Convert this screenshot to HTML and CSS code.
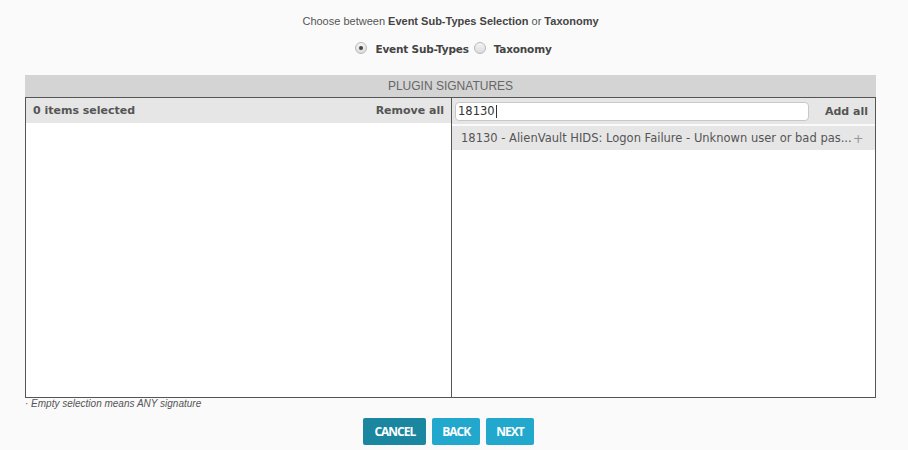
FILE: index.html
```html
<!DOCTYPE html>
<html>
<head>
<meta charset="utf-8">
<link rel="stylesheet" href="styles.css">
</head>
<body>
<div class="page">
  <p class="intro">Choose between <b>Event Sub-Types Selection</b> or <b>Taxonomy</b></p>
  <div class="radios">
    <label class="radio"><span class="dot checked"></span><b>Event Sub-Types</b></label>
    <label class="radio"><span class="dot"></span><b>Taxonomy</b></label>
  </div>
  <div class="box">
    <div class="box-title">PLUGIN SIGNATURES</div>
    <div class="panels">
      <div class="panel left">
        <div class="panel-head">
          <span>0 items selected</span>
          <span>Remove all</span>
        </div>
      </div>
      <div class="panel right">
        <div class="panel-head search">
          <div class="input">18130<span class="caret"></span></div>
          <span>Add all</span>
        </div>
        <div class="item">
          <span>18130 - AlienVault HIDS: Logon Failure - Unknown user or bad pas...</span>
          <span class="plus">+</span>
        </div>
      </div>
    </div>
  </div>
  <p class="note">· Empty selection means ANY signature</p>
  <div class="buttons">
    <button class="btn dark">CANCEL</button>
    <button class="btn">BACK</button>
    <button class="btn">NEXT</button>
  </div>
</div>
</body>
</html>
```

FILE: styles.css
```css
html, body {
  margin: 0;
  padding: 0;
  background: #fafafa;
}
.page {
  width: 851px;
  margin-left: 25px;
  font-family: "Liberation Sans", Arial, sans-serif;
  color: #555;
}
.intro {
  margin: 0;
  padding-top: 14px;
  height: 17px;
  font-size: 11px;
  line-height: 14px;
  text-align: center;
  color: #555;
}
.intro b {
  color: #444;
}
.radios {
  display: flex;
  justify-content: center;
  gap: 5px;
  margin-top: 9px;
  height: 19px;
  font-family: "DejaVu Sans", Verdana, sans-serif;
  font-size: 10.5px;
  line-height: 19px;
  color: #444;
  padding-left: 6px;
}
.radio {
  display: flex;
  align-items: center;
  gap: 8px;
}
.radio b { font-weight: bold; color: #444; letter-spacing: -0.2px; }
.dot {
  width: 12px;
  height: 12px;
  border-radius: 50%;
  border: 1px solid #b8b8b8;
  background: linear-gradient(#f4f4f4, #dcdcdc);
  box-sizing: border-box;
  position: relative;
  top: -2px;
}
.dot.checked::after {
  content: "";
  position: absolute;
  left: 3px;
  top: 3px;
  width: 4px;
  height: 4px;
  border-radius: 50%;
  background: #444;
}
.box {
  margin-top: 16px;
}
.box-title {
  height: 22px;
  line-height: 22px;
  background: #d4d4d4;
  text-align: center;
  font-size: 12px;
  color: #666;
}
.panels {
  display: flex;
  height: 299px;
  border: 1px solid #555;
  background: #fff;
}
.panel {
  flex: 1;
  min-width: 0;
}
.panel.left {
  border-right: 1px solid #555;
  flex: 0 0 425px;
}
.panel-head {
  display: flex;
  justify-content: space-between;
  align-items: center;
  height: 25px;
  padding: 0 7px 0 7px;
  background: #e6e6e6;
  font-family: "DejaVu Sans", Verdana, sans-serif;
  font-size: 11px;
  font-weight: bold;
  color: #555;
}
.panel-head.search {
  height: 26px;
  padding: 0 7px 0 3px;
  border-bottom: 2px solid #fafafa;
}
.input {
  width: 354px;
  height: 19px;
  box-sizing: border-box;
  border: 1px solid #c8c8c8;
  border-radius: 4px;
  background: #fff;
  font-weight: normal;
  font-size: 11.5px;
  line-height: 17px;
  padding-left: 2px;
  color: #333;
  display: flex;
  align-items: center;
}
.caret {
  display: inline-block;
  width: 1px;
  height: 13px;
  background: #333;
  margin-left: 1px;
}
.item {
  display: flex;
  align-items: center;
  gap: 1px;
  height: 24px;
  background: #e6e6e6;
  padding: 0 0 0 9px;
  font-family: "DejaVu Sans", Verdana, sans-serif;
  font-size: 11.5px;
  color: #555;
  white-space: nowrap;
}
.plus {
  color: #999;
  font-size: 13px;
}
.note {
  margin: 0;
  padding-top: 0;
  height: 16px;
  font-size: 10px;
  line-height: 12px;
  font-style: italic;
  color: #555;
}
.buttons {
  display: flex;
  justify-content: center;
  gap: 6px;
  margin-top: 4px;
  padding-right: 4px;
}
.btn {
  height: 27px;
  border: none;
  border-radius: 2px;
  background: #21a8cc;
  color: #fff;
  font-family: "Open Sans", sans-serif;
  font-weight: bold;
  font-size: 12px;
  padding: 0 10px;
  letter-spacing: -1px;
}
.btn.dark {
  background: #1a86a0;
  padding: 0 11px;
}
```
